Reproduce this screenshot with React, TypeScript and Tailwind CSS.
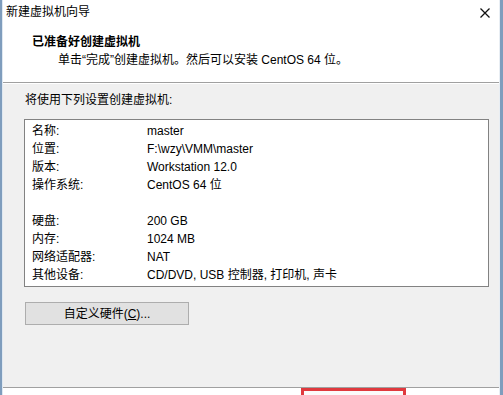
import React from "react";

const rows: [string, string][] = [
  ["名称:", "master"],
  ["位置:", "F:\\wzy\\VMM\\master"],
  ["版本:", "Workstation 12.0"],
  ["操作系统:", "CentOS 64 位"],
  ["", ""],
  ["硬盘:", "200 GB"],
  ["内存:", "1024 MB"],
  ["网络适配器:", "NAT"],
  ["其他设备:", "CD/DVD, USB 控制器, 打印机, 声卡"],
];

const font = { fontFamily: '"Liberation Sans", "Noto Sans CJK SC", sans-serif' };

export default function App() {
  return (
    <div
      className="w-[503px] h-[395px] overflow-hidden flex bg-white text-[12px] text-black"
      style={font}
    >
      {/* left frame */}
      <div className="w-[3px] h-full flex">
        <div className="w-[2px] bg-[#7f9dbd]" />
        <div className="w-[1px] bg-[#dfe8f1]" />
      </div>

      <div className="flex-1 flex flex-col">
        {/* title bar */}
        <div className="h-[23px] flex items-center justify-between pl-[3px] pr-[9px] bg-white">
          <span className="leading-[16px]">新建虚拟机向导</span>
          <svg width="10" height="10" viewBox="0 0 10 10" className="mt-[2px]">
            <path d="M0.5 0.5 L9.5 9.5 M9.5 0.5 L0.5 9.5" stroke="#111" strokeWidth="1.3" />
          </svg>
        </div>

        {/* header */}
        <div className="h-[59px] bg-white pt-[11px]">
          <div className="pl-[29px] font-bold leading-[16px]">已准备好创建虚拟机</div>
          <div className="pl-[55px] mt-[2px] leading-[16px]">
            单击“完成”创建虚拟机。然后可以安装 CentOS 64 位。
          </div>
        </div>
        <div className="h-[1px] bg-[#a0a0a0]" />
        <div className="h-[1px] bg-white" />

        {/* body */}
        <div className="flex-1 bg-[#f0f0f0] pt-[8px] flex flex-col">
          <div className="pl-[22px] leading-[16px]">将使用下列设置创建虚拟机:</div>
          <div className="ml-[21px] mt-[11px] w-[465px] h-[168px] bg-white border border-[#828282] pl-[7px] pt-[2px]">
            {rows.map(([k, v], i) => (
              <div key={i} className="flex h-[18px] items-center leading-[16px]">
                <span className="w-[115px]">{k}</span>
                <span>{v}</span>
              </div>
            ))}
          </div>
          <div className="ml-[22px] mt-[15px] w-[164px] h-[23px] bg-[#e1e1e1] border border-[#adadad] flex items-center justify-center leading-[16px]">
            自定义硬件(<span className="underline">C</span>)...
          </div>
          <div className="flex-1" />
          <div className="h-[1px] bg-[#a0a0a0]" />
        </div>

        {/* bottom strip with highlighted finish button */}
        <div className="h-[7px] bg-white flex">
          <div className="ml-[298px] w-[105px] h-full border-t-[3px] border-x-[3px] border-[#e0393e] bg-[#fbfbfb]" />
        </div>
      </div>

      {/* right frame */}
      <div className="w-[4px] h-full flex">
        <div className="w-[1px] bg-[#e8eef4]" />
        <div className="w-[3px] bg-[#7f9dbd]" />
      </div>
    </div>
  );
}
